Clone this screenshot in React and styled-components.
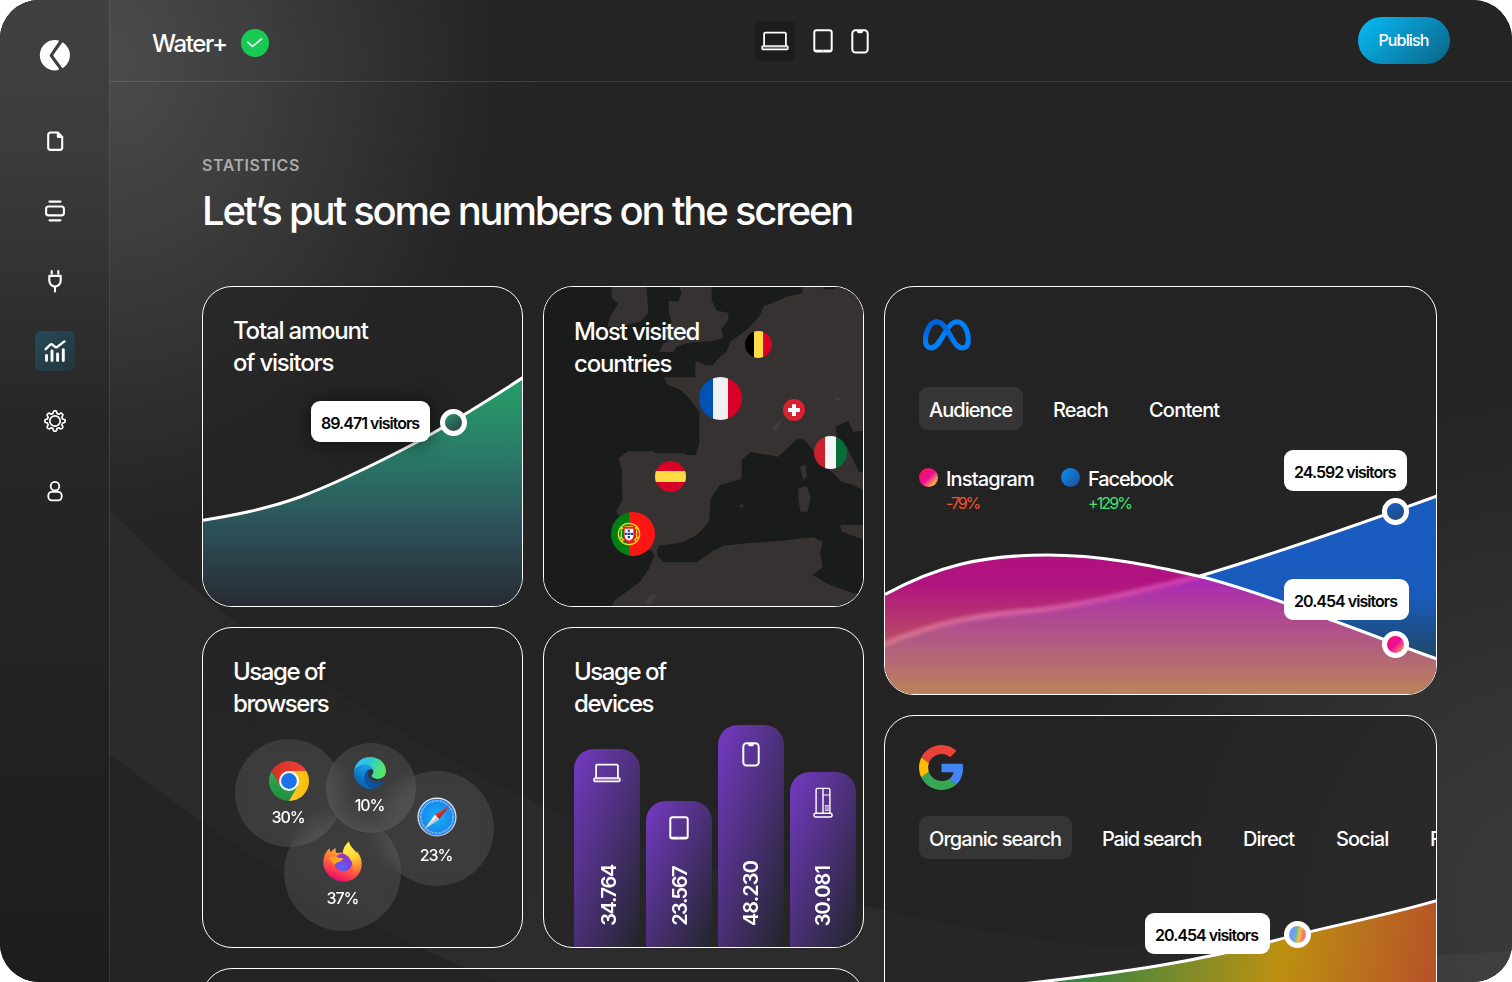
import React from "react";
import styled, { createGlobalStyle } from "styled-components";

const GlobalStyle = createGlobalStyle`
  * { box-sizing: border-box; }
  html, body { margin: 0; background: #fff; }
  body {
    width: 1512px;
    height: 982px;
    overflow: hidden;
    font-family: Inter, "Liberation Sans", sans-serif;
    color: #fff;
    -webkit-font-smoothing: antialiased;
  }
`;

/* ---------- shell ---------- */

const Frame = styled.div`
  position: relative;
  display: flex;
  width: 1512px;
  height: 982px;
  border-radius: 39px;
  overflow: hidden;
  background: #242424;
`;

const Backdrop = styled.svg`
  position: absolute;
  inset: 0;
`;

const Sidebar = styled.nav`
  position: relative;
  display: flex;
  flex-direction: column;
  align-items: center;
  gap: 30px;
  width: 110px;
  padding-top: 35px;
  border-right: 1px solid rgba(255, 255, 255, 0.12);
`;

const LogoSlot = styled.div`
  height: 40px;
  margin-bottom: 16px;
`;

const NavButton = styled.div`
  width: 40px;
  height: 40px;
  border-radius: 6px;
  background: ${(p) => (p.$active ? "linear-gradient(135deg, #254a58, #24363c)" : "transparent")};
`;

const Main = styled.div`
  position: relative;
  flex: 1;
  display: flex;
  flex-direction: column;
  min-width: 0;
`;

const Header = styled.header`
  flex: none;
  display: grid;
  grid-template-columns: 1fr auto 1fr;
  height: 82px;
  padding: 0 62px 0 42px;
  border-bottom: 1px solid rgba(255, 255, 255, 0.13);
`;

const Site = styled.div`
  display: flex;
  align-items: center;
  gap: 15px;
  padding-top: 5px;
`;

const SiteName = styled.span`
  width: 74px;
  font-size: 24px;
  font-weight: 500;
  letter-spacing: -1.35px;
  white-space: nowrap;
`;

const DeviceSwitch = styled.div`
  display: flex;
  align-items: flex-start;
  gap: 8px;
  padding-top: 21px;
  margin-left: 21px;
`;

const DeviceButton = styled.div`
  display: flex;
  align-items: center;
  justify-content: center;
  width: ${(p) => p.$w}px;
  height: 40px;
  border-radius: 5px;
  background: ${(p) => (p.$active ? "#1c1c1c" : "transparent")};
`;

const PublishButton = styled.div`
  justify-self: end;
  margin-top: 17px;
  width: 92px;
  height: 47px;
  padding-right: 1px;
  border-radius: 24px;
  background: linear-gradient(135deg, #05b8f3 5%, #0a8fbe 50%, #0b6486 100%);
  font-size: 16px;
  font-weight: 500;
  letter-spacing: -0.85px;
  line-height: 47px;
  text-align: center;
`;

const Content = styled.main`
  padding: 74px 75px 0 92px;
`;

const Eyebrow = styled.div`
  font-size: 16px;
  font-weight: 600;
  line-height: 18px;
  letter-spacing: 0.55px;
  color: #a9a9a9;
`;

const Heading = styled.h1`
  margin: 12px 0 0;
  font-size: 40px;
  font-weight: 500;
  line-height: 50px;
  letter-spacing: -2.2px;
  white-space: nowrap;
`;

const Board = styled.div`
  display: grid;
  grid-template-columns: 662px 553px;
  gap: 20px;
  margin-top: 50px;
  align-items: start;
`;

const SmallGrid = styled.div`
  display: grid;
  grid-template-columns: 321px 321px;
  grid-auto-rows: 321px;
  gap: 20px;
`;

const WideColumn = styled.div`
  display: grid;
  grid-auto-rows: 409px;
  gap: 20px;
`;

const Card = styled.section`
  position: relative;
  overflow: hidden;
  border: 1px solid #fff;
  border-radius: 30px;
  background: rgba(35, 35, 35, 0.65);
  ${(p) => p.$span && "grid-column: span 2;"}
  padding: ${(p) => p.$pad || "28px 30px"};
`;

const CardTitle = styled.h2`
  position: relative;
  margin: 0;
  font-size: 24px;
  font-weight: 500;
  line-height: 32px;
  letter-spacing: ${(p) => p.$ls || "-1.2px"};
`;

const Plot = styled.svg`
  position: absolute;
  inset: 0;
`;

const Tip = styled.div`
  position: absolute;
  left: ${(p) => p.$x}px;
  top: ${(p) => p.$y}px;
  width: ${(p) => p.$w}px;
  height: 41px;
  padding-left: 10px;
  border-radius: 9px;
  background: #fff;
  color: #050505;
  font-size: 16px;
  font-weight: 600;
  line-height: 44px;
  letter-spacing: -0.97px;
  white-space: nowrap;
  box-shadow: ${(p) => (p.$shadow ? "0 0 20px rgba(0,0,0,.6)" : "none")};
`;

const Knob = styled.div`
  position: absolute;
  left: ${(p) => p.$x - 13.5}px;
  top: ${(p) => p.$y - 13.5}px;
  width: 27px;
  height: 27px;
  border: 5px solid #fff;
  border-radius: 50%;
  background: ${(p) => p.$fill};
  background-origin: border-box;
`;

/* ---------- browser bubbles ---------- */

const Bubble = styled.div`
  position: absolute;
  left: ${(p) => p.$cx - p.$r}px;
  top: ${(p) => p.$cy - p.$r}px;
  width: ${(p) => p.$r * 2}px;
  height: ${(p) => p.$r * 2}px;
  display: flex;
  flex-direction: column;
  align-items: center;
  gap: ${(p) => p.$gap}px;
  padding-top: ${(p) => p.$pt}px;
  padding-right: ${(p) => p.$pr || 0}px;
  border-radius: 50%;
  background: rgba(255, 255, 255, 0.1);
  backdrop-filter: blur(10px);
  font-size: 16px;
  font-weight: 500;
  line-height: 20px;
  letter-spacing: -1.1px;
`;

const Share = styled.span`
  margin-right: ${(p) => p.$shift || 0}px;
`;

/* ---------- device bars ---------- */

const Bars = styled.div`
  position: absolute;
  left: 30px;
  bottom: 0;
  display: flex;
  align-items: flex-end;
  gap: 6px;
`;

const Bar = styled.div`
  display: flex;
  flex-direction: column;
  align-items: center;
  justify-content: space-between;
  width: 66px;
  height: ${(p) => p.$h}px;
  padding: ${(p) => p.$pt}px 0 21px;
  border-radius: 20px 20px 0 0;
  background: linear-gradient(${(p) => p.$angle}deg, #7139bd 4%, #24262f 97%);
`;

const BarValue = styled.span`
  writing-mode: vertical-rl;
  transform: rotate(180deg);
  font-size: 20px;
  font-weight: 600;
  line-height: 24px;
  letter-spacing: ${(p) => p.$ls}px;
  margin-left: ${(p) => p.$ml || 0}px;
`;

/* ---------- wide cards ---------- */

const Tabs = styled.div`
  display: flex;
  gap: 20px;
  margin-top: ${(p) => p.$mt}px;
`;

const Tab = styled.div`
  flex: none;
  width: ${(p) => p.$w}px;
  height: 43px;
  padding-left: 10px;
  border-radius: 9px;
  background: ${(p) => (p.$active ? "#353535" : "transparent")};
  font-size: 20px;
  font-weight: 500;
  line-height: 46px;
  letter-spacing: ${(p) => p.$ls || -0.95}px;
  white-space: nowrap;
`;

const Legend = styled.div`
  display: flex;
  margin-top: 36px;
`;

const LegendItem = styled.div`
  display: grid;
  grid-template-columns: 19px 1fr;
  column-gap: 8px;
  width: 142px;
  align-items: center;
`;

const Dot = styled.span`
  width: 19px;
  height: 19px;
  margin-top: -3px;
  border-radius: 50%;
  background: ${(p) => p.$fill};
`;

const LegendName = styled.span`
  font-size: 20px;
  font-weight: 500;
  line-height: 26px;
  letter-spacing: ${(p) => p.$ls}px;
`;

const Delta = styled.span`
  grid-column: 2;
  color: ${(p) => p.$color};
  font-size: 16px;
  font-weight: 400;
  line-height: 22px;
  letter-spacing: ${(p) => p.$ls}px;
`;

const instaFill = "linear-gradient(135deg, #fb1056 15%, #ec0c9e 50%, #f9a84e 80%, #fec14b 100%)";
const blueFill = "linear-gradient(135deg, #0c8cf0 5%, #1e4f9e 95%)";

/* ---------- icons ---------- */

const gearPath = (() => {
  const pts = [];
  for (let i = 0; i < 192; i++) {
    const a = (i / 192) * Math.PI * 2;
    const r = 8.9 + 1.15 * Math.max(-1, Math.min(1, 1.9 * Math.cos(8 * a)));
    pts.push(`${(20 + r * Math.sin(a)).toFixed(2)} ${(20 - r * Math.cos(a)).toFixed(2)}`);
  }
  return `M${pts.join("L")}Z`;
})();

const Icon = ({ children, w = 2.1 }) => (
  <svg width="40" height="40" viewBox="0 0 40 40" fill="none" stroke="#fff" strokeWidth={w} strokeLinecap="round" strokeLinejoin="round">
    {children}
  </svg>
);

const Logo = () => (
  <svg width="40" height="40" viewBox="0 0 40 40" fill="#fff">
    <path d="M20 5c1.300 0 2.700.2 3.500.5.5.2.600.7.300 1.100L15 19.600c-.4.600-.4 1.200 0 1.800l8.800 12.200c.3.500.2 1-.3 1.200-1 .4-2.200.6-3.500.6A15.200 15.200 0 0 1 20 5z" />
    <path d="M26.900 8c.5-.7 1-.6 1.500-.2a15.200 15.200 0 0 1 0 25c-.6.400-1 .5-1.500-.2l-8.200-11.300c-.4-.6-.4-1.200 0-1.800z" />
  </svg>
);

const FileIcon = () => (
  <Icon>
    <path d="M15.500 11.500h7.300l4.400 4.400v10.700a2.300 2.300 0 0 1-2.300 2.300h-9.400a2.300 2.300 0 0 1-2.300-2.300V13.800a2.300 2.300 0 0 1 2.300-2.300z" />
    <path d="M22.300 11.500v4.900h4.900z" fill="#fff" strokeWidth="1" />
  </Icon>
);

const SectionsIcon = () => (
  <Icon>
    <path d="M14.500 10.600h11M14.500 29.300h11" strokeWidth="2.200" />
    <rect x="11.100" y="15.500" width="17.800" height="8.900" rx="2.500" />
  </Icon>
);

const PlugIcon = () => (
  <Icon>
    <path d="M16.700 10v2.700M23.300 10v2.700M20 26.200v4.200" />
    <path d="M14.300 14.900h11.400v4.600a5.700 6.100 0 0 1-11.400 0z" />
  </Icon>
);

const StatsIcon = () => (
  <Icon w={2.4}>
    <path d="M10.700 18.200l4.600-4.500c.7-.6 1.400-.6 2.100-.1l2.700 2.300c.7.5 1.500.5 2.200 0l7.100-5.500" />
    <path d="M11.500 24.400v5.200M17 20v9.600M22.600 23v6.600M28.300 18.800v10.800" strokeWidth="2.900" />
  </Icon>
);

const GearIcon = () => (
  <Icon w={1.7}>
    <path d={gearPath} />
    <circle cx="20" cy="20" r="5.200" />
  </Icon>
);

const UserIcon = () => (
  <Icon w={1.8}>
    <circle cx="20" cy="15.200" r="4.300" />
    <rect x="13.300" y="20.900" width="13.400" height="8.500" rx="3.600" />
  </Icon>
);

const LaptopIcon = () => (
  <svg width="28" height="20" viewBox="0 0 28 20" fill="none" stroke="#fff" strokeWidth="1.800" strokeLinejoin="round">
    <path d="M3.100 15V2.800a1.200 1.200 0 0 1 1.200-1.200h19.400a1.200 1.200 0 0 1 1.200 1.200V15" />
    <rect x="1" y="14.900" width="26" height="3.700" rx="1.400" fill="rgba(255,255,255,.35)" strokeWidth="1.500" />
  </svg>
);

const TabletIcon = () => (
  <svg width="20" height="24" viewBox="0 0 20 24" fill="none" stroke="#fff" strokeWidth="2">
    <rect x="1.300" y="1.300" width="17.400" height="21.200" rx="2.300" />
    <path d="M2 21.600h16" strokeWidth="1.800" />
    <path d="M9.200 21.800h1.600" stroke="#999" strokeWidth=".8" />
  </svg>
);

const PhoneIcon = () => (
  <svg width="18" height="25" viewBox="0 0 18 25" fill="none" stroke="#fff" strokeWidth="2">
    <rect x="1.300" y="1.300" width="15.400" height="22.200" rx="3.300" />
    <path d="M6 1.500h6c0 2-.6 2.700-1.500 2.700h-3C6.600 4.200 6 3.500 6 1.500z" fill="#fff" stroke="none" />
  </svg>
);

const ConsoleIcon = () => (
  <svg width="20" height="31" viewBox="0 0 20 31" fill="none" stroke="#fff" strokeWidth="1.400" strokeLinejoin="round">
    <path d="M3.100 26.200V3a1.600 1.600 0 0 1 1.600-1.600h10.600A1.600 1.600 0 0 1 16.900 3v23.200M10 1.400v24.800" />
    <path d="M10 8h6.700M11.800 18.800h4M11.800 21h4M11.800 23.200h4" strokeWidth="1.200" />
    <rect x=".9" y="26.200" width="18.200" height="3.800" rx="1.900" />
  </svg>
);

const MetaLogo = () => (
  <svg width="56" height="36" viewBox="0 0 56 36" fill="none" strokeWidth="5.100" strokeLinecap="round">
    <defs>
      <linearGradient id="metaL" x1="0" y1="1" x2="0" y2="0">
        <stop offset=".1" stopColor="#0080fb" />
        <stop offset=".75" stopColor="#0064e0" />
      </linearGradient>
      <linearGradient id="metaM" x1="0" y1="0" x2="1" y2="1">
        <stop offset="0" stopColor="#0064e0" />
        <stop offset="1" stopColor="#0080fb" />
      </linearGradient>
    </defs>
    <path d="M12.500 30.800C7.500 30.800 6.500 27 6.500 23C6.500 13.500 11.500 4.800 17.600 4.800" stroke="url(#metaL)" />
    <path d="M12.500 30.800C17.500 30.800 21 24 26 15.500C30.300 8 33.500 4.800 37.800 4.800C44.500 4.800 49.300 13.500 49.300 23C49.300 28 47.300 30.800 43.500 30.800" stroke="#0080fb" />
    <path d="M17.600 4.800C22.500 4.800 25.500 9 30 16.200C34.500 23.800 37.500 30.800 43.500 30.800" stroke="url(#metaM)" />
  </svg>
);

const GoogleLogo = () => (
  <svg width="45" height="45" viewBox="0 0 48 48">
    <path fill="#EA4335" d="M24 9.500c3.540 0 6.710 1.220 9.210 3.600l6.850-6.850C35.900 2.380 30.470 0 24 0 14.620 0 6.510 5.380 2.560 13.220l7.980 6.190C12.430 13.720 17.740 9.500 24 9.500z" />
    <path fill="#4285F4" d="M46.980 24.550c0-1.570-.15-3.090-.38-4.550H24v9.020h12.940c-.58 2.960-2.260 5.480-4.780 7.180l7.730 6c4.510-4.180 7.090-10.360 7.090-17.650z" />
    <path fill="#FBBC05" d="M10.530 28.590c-.48-1.450-.76-2.990-.76-4.590s.27-3.140.76-4.590l-7.980-6.190C.92 16.460 0 20.120 0 24c0 3.880.92 7.540 2.560 10.780l7.970-6.190z" />
    <path fill="#34A853" d="M24 48c6.480 0 11.930-2.130 15.890-5.810l-7.730-6c-2.150 1.450-4.920 2.300-8.160 2.300-6.260 0-11.570-4.220-13.470-9.910l-7.980 6.190C6.510 42.620 14.620 48 24 48z" />
  </svg>
);

const ChromeLogo = () => (
  <svg width="40" height="40" viewBox="0 0 48 48">
    <defs>
      <linearGradient id="chR" x1="0" x2="1"><stop offset="0" stopColor="#d93025" /><stop offset="1" stopColor="#ea4335" /></linearGradient>
      <linearGradient id="chY" x1="0" x2="1"><stop offset="0" stopColor="#fcc934" /><stop offset="1" stopColor="#fbbc04" /></linearGradient>
      <linearGradient id="chG" x1="0" y1="0" x2="0" y2="1"><stop offset="0" stopColor="#34a853" /><stop offset="1" stopColor="#1e8e3e" /></linearGradient>
    </defs>
    <path fill="url(#chG)" d="M13.610 30L3.220 12A24 24 0 0 0 24 48L34.390 30z" />
    <path fill="url(#chY)" d="M34.390 30L24 48A24 24 0 0 0 44.780 12H24z" />
    <path fill="url(#chR)" d="M24 12H44.780A24 24 0 0 0 3.220 12L13.610 30z" />
    <circle cx="24" cy="24" r="12" fill="#fff" />
    <circle cx="24" cy="24" r="9.500" fill="#1a73e8" />
  </svg>
);

const EdgeLogo = () => (
  <svg width="32" height="32" viewBox="0 0 256 256">
    <defs>
      <linearGradient id="edD" x1="60" y1="0" x2="240" y2="0" gradientUnits="userSpaceOnUse"><stop offset="0" stopColor="#0c59a4" /><stop offset="1" stopColor="#114a8b" /></linearGradient>
      <linearGradient id="edM" x1="130" y1="90" x2="40" y2="230" gradientUnits="userSpaceOnUse"><stop offset="0" stopColor="#1b9de2" /><stop offset=".5" stopColor="#0f81cf" /><stop offset="1" stopColor="#0a5aa8" /></linearGradient>
      <linearGradient id="edT" x1="20" y1="50" x2="240" y2="120" gradientUnits="userSpaceOnUse"><stop offset="0" stopColor="#35c1f1" /><stop offset=".4" stopColor="#2dc3d8" /><stop offset=".7" stopColor="#43dc95" /><stop offset="1" stopColor="#5ee462" /></linearGradient>
    </defs>
    <path fill="url(#edT)" d="M1 118C6 48 62 0 127 0c80 0 129 54 129 113 0 36-28 62-62 62-32 0-56-13-56-24 0-7 16-12 16-33 0-27-29-50-63-50C45 68 5 95 1 118z" />
    <path fill="url(#edM)" d="M1 118C8 78 48 60 90 60c36 0 65 26 65 53-5-9-16-15-27-15-25 0-36 27-36 55 0 46 30 78 62 92-8 6-16 11-26 11C58 256-5 190 1 118z" />
    <path fill="url(#edD)" d="M101 109c-12 18-20 38-20 59 0 44 29 79 70 86 41-5 70-30 85-55 3-5-1-8-6-6-18 8-34 10-50 8-37-4-69-36-69-68 0-9 5-20 13-27-9-3-17-1-23 3z" />
    <path fill="#2b3640" d="M128 97c16-1 27 7 26 23-1 15-16 22-16 32 0 10 25 25 56 24 17-1 35-8 45-20-8 20-20 28-45 28-43 0-82-23-82-51 0-14 4-29 16-36z" />
  </svg>
);

const SafariLogo = () => (
  <svg width="40" height="40" viewBox="0 0 40 40">
    <defs>
      <radialGradient id="saf" cx=".5" cy=".5" r=".55"><stop offset="0" stopColor="#12b9f2" /><stop offset="1" stopColor="#1f78ec" /></radialGradient>
      <linearGradient id="safRing" x1="0" y1="0" x2="0" y2="1"><stop offset="0" stopColor="#f7f7f7" /><stop offset="1" stopColor="#bdbdbd" /></linearGradient>
    </defs>
    <circle cx="20" cy="20" r="19.600" fill="url(#safRing)" />
    <circle cx="20" cy="20" r="18.300" fill="url(#saf)" />
    <circle cx="20" cy="20" r="16.200" fill="none" stroke="#fff" strokeOpacity=".75" strokeWidth="1.900" strokeDasharray=".55 .863" />
    <path d="M32 9L22.200 22.200 17.800 17.800z" fill="#e8332f" />
    <path d="M32 9L22.200 22.200 20 20z" fill="#c4231f" />
    <path d="M8 31.400L17.800 17.800 22.200 22.200z" fill="#f4f4f4" />
    <path d="M8 31.400L20 20 22.200 22.200z" fill="#c9c9c9" />
  </svg>
);

const FirefoxLogo = () => (
  <svg width="40" height="41" viewBox="0 0 120 123">
    <defs>
      <linearGradient id="ffB" x1=".75" y1="0" x2=".35" y2="1"><stop offset="0" stopColor="#ffec46" /><stop offset=".3" stopColor="#ffb12c" /><stop offset=".55" stopColor="#ff7139" /><stop offset=".78" stopColor="#fb3a50" /><stop offset="1" stopColor="#e2066f" /></linearGradient>
      <linearGradient id="ffY" x1=".4" y1="0" x2=".6" y2="1"><stop offset="0" stopColor="#fff24f" /><stop offset=".5" stopColor="#ffd43a" /><stop offset="1" stopColor="#ff8a30" stopOpacity="0" /></linearGradient>
      <radialGradient id="ffP" cx=".4" cy=".75" r=".75"><stop offset="0" stopColor="#5f62f5" /><stop offset=".6" stopColor="#7d40dc" /><stop offset="1" stopColor="#a430c8" /></radialGradient>
      <linearGradient id="ffO" x1="0" y1="0" x2="1" y2=".6"><stop offset="0" stopColor="#ff8a2a" /><stop offset="1" stopColor="#ffb52e" /></linearGradient>
    </defs>
    <path fill="url(#ffB)" d="M20 22c0 5 1 9 4 12 4-7 9-11 14-13-1 6 0 11 3 15 6 0 12-2 19-1 2-14 8-25 18-34 0 13 8 20 16 29 3 1 5 5 5 9 2-2 2-5 2-9 15 18 19 38 12 58-8 22-29 34-51 34C29 122 1 96 1 64c0-17 7-32 19-42z" />
    <circle cx="61" cy="64" r="27" fill="url(#ffP)" />
    <path fill="url(#ffY)" d="M78 2c0 15 26 26 31 54 3 24-8 38-21 46 6-10 6-26-1-38-6-9-8-14-13-19-6-5-15-5-14-12 1-13 8-22 18-31z" />
    <path fill="url(#ffO)" d="M17 50c8-6 18-7 25-3 3 3 8 4 17 4 2 6-5 9-12 12-6 2-10 3-12 8-6-5-13-10-18-21z" />
  </svg>
);

/* ---------- map with flags ---------- */

const EuropeMap = () => (
  <Plot width="319" height="319" viewBox="12 21 957 957">
    <rect x="12" y="21" width="957" height="957" fill="#1a1c1b" />
    <g fill="#353231">
      <path d="M787 20V40L740 50L700 68L672 78L660 105L640 130L620 150L595 168L570 185L560 215L530 240L518 256H500L470 245H466V292H372L380 312L425 332L450 358L478 395V490L468 525H435V520H345L340 514H265L235 535L245 565L247 660L228 695L250 720L265 800L335 812L343 825L338 840L325 870L300 905L260 935L225 960L215 980H970V942L940 940L870 915L818 885L848 860L840 820L848 785L820 772L690 785L620 790L550 797L515 815L470 847H370L352 828L350 812L357 797L410 790L430 785L470 765L495 740L508 720L512 655L540 615L605 597V540L632 515L652 520L715 530L770 478H790L820 510L860 560L905 605L940 615L970 632V20z" />
      <path d="M385 62L415 65L425 40L418 20H515V60L530 92L565 98V120L545 145L550 175L520 182L440 190L410 200L400 216H357L370 190L385 185L370 150L395 125L385 95L388 80z" />
      <path d="M215 20H320L325 100L300 125L240 140H203L210 110L235 70L215 55z" />
      <path d="M775 625L800 618L812 650L803 695H782L775 660z" />
      <path d="M780 560L797 552L800 590L790 600z" />
      <path d="M597 680L608 670L610 683z" />
    </g>
    <path fill="#1a1c1b" d="M887 440L925 422L940 455L970 452V576H957L940 540L920 500L890 470zM850 20h35v8h-35z" />
    <path fill="#353231" d="M900 735H970V778L905 755z" />
    <g fill="#403e3d">
      <path d="M697 440l15-12 12-8-4 20-16 16zM880 352l22 2 4 8-20-2zM318 970l12-25 15-5 2 12-16 22z" />
    </g>
    <clipPath id="be"><circle cx="655.500" cy="193.500" r="40.500" /></clipPath>
    <g clipPath="url(#be)">
      <path fill="#000" d="M600 150h42v90h-42z" />
      <path fill="#ffda44" d="M642 150h28v90h-28z" />
      <path fill="#d80027" d="M670 150h30v90h-30z" />
    </g>
    <clipPath id="fr"><circle cx="541.500" cy="355.500" r="64.500" /></clipPath>
    <g clipPath="url(#fr)">
      <path fill="#0052b4" d="M470 290h49v135h-49z" />
      <path fill="#f0f0f0" d="M519 290h45v135h-45z" />
      <path fill="#d80027" d="M564 290h45v135h-45z" />
    </g>
    <circle cx="762" cy="390" r="33" fill="#d92231" />
    <path d="M762 373v35M744.500 390h35" stroke="#fff" strokeWidth="12" />
    <clipPath id="it"><circle cx="871.500" cy="517.500" r="49.500" /></clipPath>
    <g clipPath="url(#it)">
      <path fill="#ca222c" d="M820 465h35v105h-35z" />
      <path fill="#f4f5f7" d="M855 465h33v105h-33z" />
      <path fill="#086e38" d="M888 465h35v105h-35z" />
    </g>
    <clipPath id="es"><circle cx="391.500" cy="589.500" r="46.500" /></clipPath>
    <g clipPath="url(#es)">
      <path fill="#d80027" d="M340 540h100v100H340z" />
      <path fill="#ffda44" d="M340 573h100v33H340z" />
    </g>
    <clipPath id="pt"><circle cx="279" cy="762" r="66" /></clipPath>
    <g clipPath="url(#pt)">
      <path fill="#008013" d="M210 690h57v140h-57z" />
      <path fill="#ff1614" d="M267 690h80v140h-80z" />
    </g>
    <g fill="none" stroke="#f1e51b" strokeWidth="3.500">
      <circle cx="267" cy="762" r="32" />
      <path d="M240 748Q267 730 294 748M238 772Q267 790 296 772M243 740L291 786M291 740L243 786M244 750V776M290 750V776" />
    </g>
    <path d="M249 740h36v28q0 17-18 22q-18-5-18-22z" fill="#ed1c1c" />
    <path d="M254 746h26v22q0 10-13 14q-13-4-13-14z" fill="#fff" />
    <path d="M263 749h7v6h-7zM255 758h7v7h-7zM263.500 758h7v7h-7zM272 758h7v7h-7zM263 768h7v7h-7z" fill="#17449c" />
  </Plot>
);

const pinkLine = "M0 307.500C50 280 95 268 162 268C215 268 265 278 315 289.500C360 300.500 405 318 445 332.500C480 345 515 359 552 372";
const blueLine = "M0 357C50 336 90 328 145 324C200 318 250 305 315 289C395 265 475 237 552 209";

const SocialPlot = () => (
  <Plot width="551" height="407" viewBox="0 0 551 407">
    <defs>
      <linearGradient id="blueArea" x1="0" y1="209" x2="0" y2="375" gradientUnits="userSpaceOnUse">
        <stop offset="0" stopColor="#195cc0" />
        <stop offset=".6" stopColor="#195bbd" />
        <stop offset=".8" stopColor="#1d508f" />
        <stop offset="1" stopColor="#1f4766" />
      </linearGradient>
      <linearGradient id="pinkArea" x1="0" y1="268" x2="0" y2="407" gradientUnits="userSpaceOnUse">
        <stop offset="0" stopColor="#b01180" />
        <stop offset=".2" stopColor="#b0137f" />
        <stop offset=".5" stopColor="#b73b6d" />
        <stop offset="1" stopColor="#bb815b" />
      </linearGradient>
      <linearGradient id="mixArea" x1="0" y1="285" x2="0" y2="407" gradientUnits="userSpaceOnUse">
        <stop offset="0" stopColor="#ab20c0" />
        <stop offset=".3" stopColor="#ae4199" />
        <stop offset=".6" stopColor="#b15d7e" />
        <stop offset="1" stopColor="#bb825b" />
      </linearGradient>
      <linearGradient id="hazeLine" x1="0" y1="0" x2="315" y2="0" gradientUnits="userSpaceOnUse">
        <stop offset="0" stopColor="#f0909c" />
        <stop offset=".4" stopColor="#ee7fb4" />
        <stop offset="1" stopColor="#e250c0" />
      </linearGradient>
      <clipPath id="pinkClip"><path d={`${pinkLine}V407H0z`} /></clipPath>
      <clipPath id="rightClip"><path d="M313 0H551V407H313z" /></clipPath>
      <filter id="soft" x="-5%" y="-20%" width="110%" height="140%"><feGaussianBlur stdDeviation="2.500" /></filter>
      <filter id="softLine" x="-5%" y="-20%" width="110%" height="140%"><feGaussianBlur stdDeviation="2" /></filter>
    </defs>
    <g clipPath="url(#rightClip)">
      <path d={`${blueLine}V407H0z`} fill="url(#blueArea)" />
      <path d={blueLine} fill="none" stroke="#fff" strokeWidth="3" />
    </g>
    <g clipPath="url(#pinkClip)">
      <path d={`${pinkLine}V407H0z`} fill="url(#pinkArea)" />
      <path d="M-20 365L0 357C50 336 90 328 145 324C200 318 250 305 315 289L330 270H580V430H-20z" fill="url(#mixArea)" filter="url(#soft)" />
      <path d="M-20 365L0 357C50 336 90 328 145 324C200 318 250 305 315 289" fill="none" stroke="url(#hazeLine)" strokeOpacity=".8" strokeWidth="4" filter="url(#softLine)" />
    </g>
    <path d={pinkLine} fill="none" stroke="#fff" strokeWidth="3" />
  </Plot>
);

const SearchPlot = () => (
  <Plot width="551" height="407" viewBox="0 0 551 407">
    <defs>
      <linearGradient id="searchArea" x1="150" y1="250" x2="560" y2="320" gradientUnits="userSpaceOnUse">
        <stop offset="0" stopColor="#1f7f5a" />
        <stop offset=".1" stopColor="#35833f" />
        <stop offset=".3" stopColor="#6d8a30" />
        <stop offset=".58" stopColor="#bd9010" />
        <stop offset="1" stopColor="#b54a2c" />
      </linearGradient>
    </defs>
    <path d="M0 280C60 276 110 271 150 266.500C240 256 310 246 386 225.500C440 211 500 200 552 184.500V407H0z" fill="url(#searchArea)" />
    <path d="M0 280C60 276 110 271 150 266.500C240 256 310 246 386 225.500C440 211 500 200 552 184.500" fill="none" stroke="#fff" strokeWidth="3" />
  </Plot>
);

const PageBackdrop = () => (
  <Backdrop width="1512" height="982" viewBox="0 0 1512 982">
    <defs>
      <linearGradient id="side" x1="0" y1="0" x2="0" y2="1">
        <stop offset="0" stopColor="#404040" />
        <stop offset=".15" stopColor="#3c3c3c" />
        <stop offset=".42" stopColor="#272727" />
        <stop offset="1" stopColor="#1d1d1d" />
      </linearGradient>
      <radialGradient id="glow" cx="110" cy="50" r="440" gradientUnits="userSpaceOnUse" gradientTransform="scale(1 1.2)">
        <stop offset="0" stopColor="#4b4b4b" />
        <stop offset=".35" stopColor="#3d3d3d" />
        <stop offset=".75" stopColor="#2a2a2a" />
        <stop offset="1" stopColor="#242424" stopOpacity="0" />
      </radialGradient>
      <radialGradient id="glow2" cx="1560" cy="900" r="620" gradientUnits="userSpaceOnUse">
        <stop offset="0" stopColor="#3c3c3c" />
        <stop offset=".5" stopColor="#2e2e2e" />
        <stop offset="1" stopColor="#242424" stopOpacity="0" />
      </radialGradient>
      <linearGradient id="wave" x1="0" y1="500" x2="0" y2="982" gradientUnits="userSpaceOnUse">
        <stop offset="0" stopColor="#fff" stopOpacity=".026" />
        <stop offset="1" stopColor="#fff" stopOpacity=".036" />
      </linearGradient>
    </defs>
    <rect width="1512" height="982" fill="#242424" />
    <rect x="110" width="900" height="700" fill="url(#glow)" />
    <rect x="700" y="200" width="812" height="782" fill="url(#glow2)" />
    <rect width="110" height="982" fill="url(#side)" />
    <path d="M110 511C160 560 200 597 250 632C340 695 430 755 523 797C640 850 750 885 884 910C1080 958 1300 966 1512 951V982H500C380 934 275 874 200 820C160 792 135 772 110 755z" fill="url(#wave)" />
  </Backdrop>
);

export default function App() {
  return (
    <>
      <GlobalStyle />
      <Frame>
        <PageBackdrop />
        <Sidebar>
          <LogoSlot><Logo /></LogoSlot>
          <NavButton><FileIcon /></NavButton>
          <NavButton><SectionsIcon /></NavButton>
          <NavButton><PlugIcon /></NavButton>
          <NavButton $active><StatsIcon /></NavButton>
          <NavButton><GearIcon /></NavButton>
          <NavButton><UserIcon /></NavButton>
        </Sidebar>
        <Main>
          <Header>
            <Site>
              <SiteName>Water+</SiteName>
              <svg width="28" height="28" viewBox="0 0 28 28">
                <circle cx="14" cy="14" r="14" fill="#18ca54" />
                <path d="M6.800 13.200l4.600 4.300 9.200-7.700" fill="none" stroke="#fff" strokeWidth="1.600" strokeLinecap="round" strokeLinejoin="round" />
              </svg>
            </Site>
            <DeviceSwitch>
              <DeviceButton $w={40} $active><LaptopIcon /></DeviceButton>
              <DeviceButton $w={40}><TabletIcon /></DeviceButton>
              <DeviceButton $w={18}><PhoneIcon /></DeviceButton>
            </DeviceSwitch>
            <PublishButton>Publish</PublishButton>
          </Header>
          <Content>
            <Eyebrow>STATISTICS</Eyebrow>
            <Heading>Let’s put some numbers on the screen</Heading>
            <Board>
              <SmallGrid>
                <Card>
                  <Plot width="319" height="319" viewBox="0 0 319 319">
                    <defs>
                      <linearGradient id="visits" x1="0" y1="91" x2="0" y2="319" gradientUnits="userSpaceOnUse">
                        <stop offset="0" stopColor="#259f68" />
                        <stop offset=".35" stopColor="#2a7867" />
                        <stop offset=".65" stopColor="#2c5159" />
                        <stop offset="1" stopColor="#282b33" />
                      </linearGradient>
                    </defs>
                    <path d="M0 233.300C31 228 64 222 97 210C131 197 164 181 197 164C230 147 264 127 320 90.500V319H0z" fill="url(#visits)" />
                    <path d="M0 233.300C31 228 64 222 97 210C131 197 164 181 197 164C230 147 264 127 320 90.500" fill="none" stroke="#fff" strokeWidth="3" />
                  </Plot>
                  <CardTitle>Total amount<br />of visitors</CardTitle>
                  <Tip $x={108} $y={114} $w={119} $shadow>89.471 visitors</Tip>
                  <Knob $x={250.5} $y={135.5} $fill="linear-gradient(145deg, #2a8767 25%, #2a3f45 80%)" />
                </Card>
                <Card $pad="29px 30px">
                  <EuropeMap />
                  <CardTitle>Most visited<br />countries</CardTitle>
                </Card>
                <Card>
                  <CardTitle $ls="-1.45px">Usage of<br />browsers</CardTitle>
                  <Bubble $cx={233.5} $cy={200.5} $r={57.5} $pt={26} $gap={8}><SafariLogo /><Share $shift={1}>23%</Share></Bubble>
                  <Bubble $cx={139.5} $cy={244.5} $r={58.5} $pt={27} $gap={6}><FirefoxLogo /><Share>37%</Share></Bubble>
                  <Bubble $cx={86} $cy={165} $r={54} $pt={22} $gap={6}><ChromeLogo /><Share $shift={2}>30%</Share></Bubble>
                  <Bubble $cx={168} $cy={160} $r={45} $pt={14} $pr={3} $gap={6}><EdgeLogo /><Share>10%</Share></Bubble>
                </Card>
                <Card>
                  <CardTitle $ls="-1.45px">Usage of<br />devices</CardTitle>
                  <Bars>
                    <Bar $h={198} $pt={14} $angle={110}><LaptopIcon /><BarValue $ls={-1.3} $ml={3}>34.764</BarValue></Bar>
                    <Bar $h={146} $pt={15} $angle={115}><TabletIcon /><BarValue $ls={-1.5} $ml={1}>23.567</BarValue></Bar>
                    <Bar $h={222} $pt={17} $angle={108}><PhoneIcon /><BarValue $ls={-0.9}>48.230</BarValue></Bar>
                    <Bar $h={175} $pt={15} $angle={112}><ConsoleIcon /><BarValue $ls={-0.9}>30.081</BarValue></Bar>
                  </Bars>
                </Card>
                <Card $span />
              </SmallGrid>
              <WideColumn>
                <Card $pad="30px 34px">
                  <MetaLogo />
                  <Tabs $mt={30}>
                    <Tab $w={104} $active>Audience</Tab>
                    <Tab $w={76}>Reach</Tab>
                    <Tab $w={92} $ls={-0.8}>Content</Tab>
                  </Tabs>
                  <Legend>
                    <LegendItem>
                      <Dot $fill={instaFill} />
                      <LegendName $ls={-0.85}>Instagram</LegendName>
                      <Delta $color="#f4542f" $ls={-2.1}>-79%</Delta>
                    </LegendItem>
                    <LegendItem>
                      <Dot $fill={blueFill} />
                      <LegendName $ls={-1.1}>Facebook</LegendName>
                      <Delta $color="#3fe66f" $ls={-1.9}>+129%</Delta>
                    </LegendItem>
                  </Legend>
                  <SocialPlot />
                  <Tip $x={399} $y={163} $w={123}>24.592 visitors</Tip>
                  <Tip $x={399} $y={292} $w={125}>20.454 visitors</Tip>
                  <Knob $x={510.5} $y={224.5} $fill="linear-gradient(160deg, #195cc0 25%, #24496d 85%)" />
                  <Knob $x={510.5} $y={357.5} $fill={instaFill} />
                </Card>
                <Card $pad="29px 34px">
                  <SearchPlot />
                  <GoogleLogo />
                  <Tabs $mt={22}>
                    <Tab $w={153} $active>Organic search</Tab>
                    <Tab $w={121} $ls={-1.15}>Paid search</Tab>
                    <Tab $w={73}>Direct</Tab>
                    <Tab $w={74}>Social</Tab>
                    <Tab $w={90}>Referral</Tab>
                  </Tabs>
                  <Tip $x={260} $y={197} $w={125}>20.454 visitors</Tip>
                  <Knob $x={412} $y={218.5} $fill="linear-gradient(100deg, #6f9ff5 38%, #7cb98a 46%, #f3c14c 56%, #ef7a6d 68%)" />
                </Card>
              </WideColumn>
            </Board>
          </Content>
        </Main>
      </Frame>
    </>
  );
}
